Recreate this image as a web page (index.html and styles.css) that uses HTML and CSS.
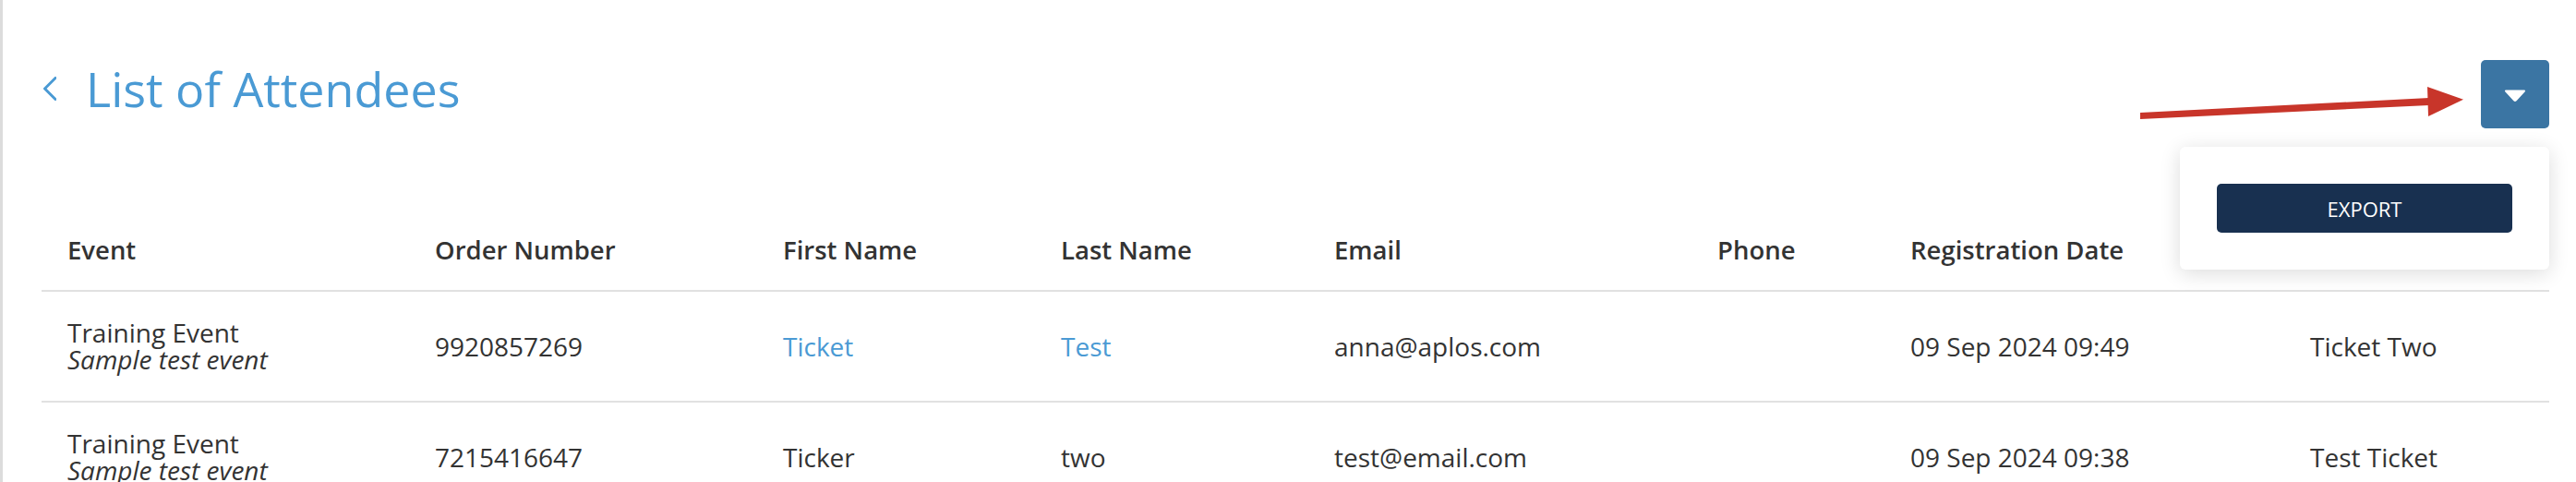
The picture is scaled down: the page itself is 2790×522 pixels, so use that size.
FILE: index.html
```html
<!DOCTYPE html>
<html lang="en">
<head>
<meta charset="utf-8">
<title>List of Attendees</title>
<link rel="stylesheet" href="styles.css">
</head>
<body>
<div class="page">
  <header class="topbar">
    <div class="title-group">
      <svg class="back" viewBox="0 0 16 26" width="16" height="26" aria-hidden="true">
        <polyline points="15,1.5 3.5,13 15,24.5" fill="none" stroke="#4a9ad4" stroke-width="3" stroke-linecap="round" stroke-linejoin="round"/>
      </svg>
      <h1 class="title">List of Attendees</h1>
    </div>
    <button class="menu-btn" aria-label="Actions">
      <svg viewBox="0 0 24 13" width="24" height="13" aria-hidden="true">
        <path d="M2 1.5 H22 L12.8 11.5 Q12 12.3 11.2 11.5 Z" fill="#fff" stroke="#fff" stroke-width="2" stroke-linejoin="round"/>
      </svg>
    </button>
  </header>

  <svg class="arrow" viewBox="0 0 365 45" width="365" height="45" aria-hidden="true">
    <polygon points="8,34 8,41 321,26 321,18" fill="#c8352a"/>
    <polygon points="319,6 358,19.7 320,38" fill="#c8352a"/>
  </svg>

  <div class="dropdown">
    <button class="export-btn">EXPORT</button>
  </div>

  <div class="table">
    <div class="row head">
      <div class="cell">Event</div>
      <div class="cell">Order Number</div>
      <div class="cell">First Name</div>
      <div class="cell">Last Name</div>
      <div class="cell">Email</div>
      <div class="cell">Phone</div>
      <div class="cell">Registration Date</div>
      <div class="cell">Ticket Name</div>
    </div>
    <div class="row body">
      <div class="cell event"><span>Training Event</span><em>Sample test event</em></div>
      <div class="cell">9920857269</div>
      <div class="cell"><a class="link" href="#">Ticket</a></div>
      <div class="cell"><a class="link" href="#">Test</a></div>
      <div class="cell">anna@aplos.com</div>
      <div class="cell"></div>
      <div class="cell">09 Sep 2024 09:49</div>
      <div class="cell">Ticket Two</div>
    </div>
    <div class="row body">
      <div class="cell event"><span>Training Event</span><em>Sample test event</em></div>
      <div class="cell">7215416647</div>
      <div class="cell">Ticker</div>
      <div class="cell">two</div>
      <div class="cell">test@email.com</div>
      <div class="cell"></div>
      <div class="cell">09 Sep 2024 09:38</div>
      <div class="cell">Test Ticket</div>
    </div>
  </div>
</div>
</body>
</html>
```

FILE: styles.css
```css
* { box-sizing: border-box; }
html, body { margin: 0; padding: 0; background: #fff; }
body {
  font-family: "Open Sans", "Noto Sans", "Liberation Sans", sans-serif;
  color: #333;
  overflow: hidden;
  height: 522px;
}
.page {
  position: relative;
  height: 522px;
  overflow: hidden;
  border-left: 3px solid #dcdcdc;
  padding: 0 29px 0 42px;
}
.topbar {
  display: flex;
  justify-content: space-between;
  align-items: flex-start;
  padding-top: 65px;
}
.title-group {
  display: flex;
  align-items: center;
  height: 62px;
}
.back {
  display: block;
  margin-left: 0;
  margin-right: 32px;
}
.title {
  margin: 0;
  font-weight: 400;
  font-size: 52px;
  line-height: 62px;
  color: #4a9ad4;
}
.menu-btn {
  width: 74px;
  height: 74px;
  border: 0;
  border-radius: 5px;
  background: #3b75a3;
  display: flex;
  align-items: center;
  justify-content: center;
  padding: 0;
}
.menu-btn svg { display: block; margin-top: 2px; }
.arrow {
  position: absolute;
  left: 2307px;
  top: 88px;
  display: block;
}
.dropdown {
  position: absolute;
  top: 159px;
  right: 29px;
  width: 400px;
  height: 133px;
  background: #fff;
  border-radius: 6px;
  box-shadow: 0 4px 22px rgba(0, 0, 0, 0.14);
  padding: 40px;
  z-index: 2;
}
.export-btn {
  width: 320px;
  height: 53px;
  border: 0;
  border-radius: 5px;
  background: #183050;
  color: #fff;
  font-family: "Open Sans", "Noto Sans", sans-serif;
  font-size: 22px;
  padding: 0;
}
.table {
  margin-top: 88px;
}
.row {
  display: grid;
  grid-template-columns: 398px 377px 301px 296px 415px 209px 433px 287px;
  border-bottom: 2px solid #e1e1e1;
}
.cell {
  padding-left: 28px;
  font-size: 28px;
  line-height: 37px;
  white-space: nowrap;
}
.head .cell {
  font-weight: 600;
  font-size: 27.5px;
  padding-top: 25px;
  padding-bottom: 25px;
}
.body {
  height: 120px;
  align-items: center;
}
.event {
  display: flex;
  flex-direction: column;
  line-height: 29px;
}
.event em { font-style: italic; }
.link {
  color: #4a9ad4;
  text-decoration: none;
}
```
